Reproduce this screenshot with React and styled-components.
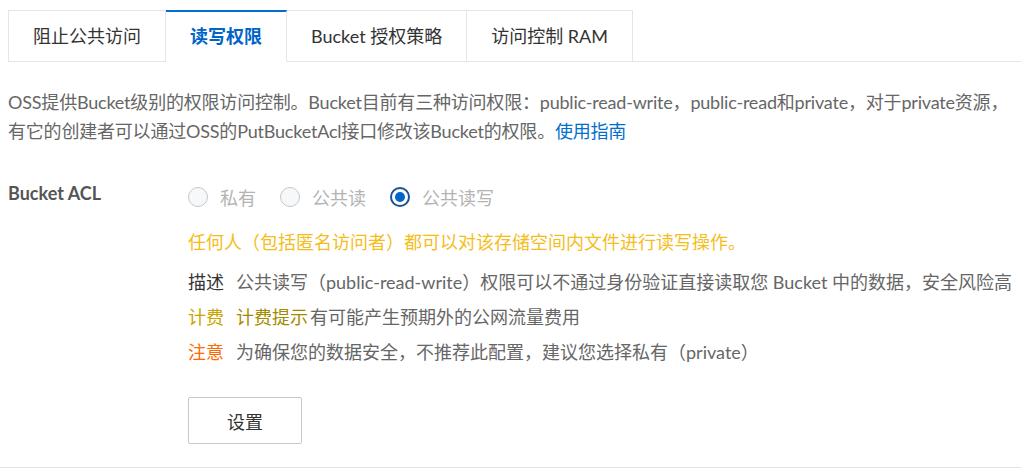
import React from "react";
import styled, { createGlobalStyle } from "styled-components";

const GlobalStyle = createGlobalStyle`
    body {
        margin: 0;
        background: #ffffff;
        font-family: Lato, "Noto Sans CJK SC", sans-serif;
        font-size: 18px;
        color: #666666;
    }
`;

const tabs = ["阻止公共访问", "读写权限", "Bucket 授权策略", "访问控制 RAM"];

const radios = [
    { label: "私有", checked: false },
    { label: "公共读", checked: false },
    { label: "公共读写", checked: true },
];

const App = () => {
    return (
        <Page>
            <GlobalStyle />
            <Tabs>
                {tabs.map((tab, i) => (
                    <Tab key={tab} active={i === 1}>
                        {tab}
                    </Tab>
                ))}
                <TabRest />
            </Tabs>
            <Intro>
                OSS提供Bucket级别的权限访问控制。Bucket目前有三种访问权限：public-read-write，public-read和private，对于private资源，有它的创建者可以通过OSS的PutBucketAcl接口修改该Bucket的权限。
                <a href="#guide">使用指南</a>
            </Intro>
            <Form>
                <Label>Bucket ACL</Label>
                <Field>
                    <RadioGroup>
                        {radios.map((r) => (
                            <RadioItem key={r.label}>
                                <Circle checked={r.checked} />
                                {r.label}
                            </RadioItem>
                        ))}
                    </RadioGroup>
                    <Warning>任何人（包括匿名访问者）都可以对该存储空间内文件进行读写操作。</Warning>
                    <Details>
                        <Detail>
                            <Tag tone="#333333">描述</Tag>
                            公共读写（public-read-write）权限可以不通过身份验证直接读取您 Bucket 中的数据，安全风险高
                        </Detail>
                        <Detail>
                            <Tag tone="#c9a400">计费</Tag>
                            <Hint>计费提示</Hint>有可能产生预期外的公网流量费用
                        </Detail>
                        <Detail>
                            <Tag tone="#ff6a00">注意</Tag>
                            为确保您的数据安全，不推荐此配置，建议您选择私有（private）
                        </Detail>
                    </Details>
                    <Button>设置</Button>
                </Field>
            </Form>
        </Page>
    );
};

const Page = styled.div`
    padding: 10px 0 0 8px;
    border-bottom: 1px solid #e5e5e5;
    padding-bottom: 23px;
`;

const Tabs = styled.div`
    display: flex;
    height: 52px;
`;

const Tab = styled.div`
    display: flex;
    align-items: center;
    padding: 0 24px 3px;
    border: 1px solid #e5e5e5;
    border-left: none;
    &:first-child {
        border-left: 1px solid #e5e5e5;
    }
    border-top: ${(p) => (p.active ? "2px solid #0070cc" : "1px solid #e5e5e5")};
    border-bottom: ${(p) => (p.active ? "1px solid #ffffff" : "1px solid #e5e5e5")};
    color: ${(p) => (p.active ? "#0064c8" : "#333333")};
    font-weight: ${(p) => (p.active ? 700 : 400)};
    white-space: nowrap;
`;

const TabRest = styled.div`
    flex: 1;
    border-bottom: 1px solid #e5e5e5;
`;

const Intro = styled.p`
    margin: 26px 0 0;
    line-height: 29px;
    letter-spacing: -0.2px;
    a {
        color: #0070cc;
        text-decoration: none;
    }
`;

const Form = styled.div`
    display: flex;
    margin-top: 36px;
`;

const Label = styled.div`
    width: 180px;
    flex-shrink: 0;
    font-weight: 700;
    color: #555555;
    line-height: 22px;
`;

const Field = styled.div`
    display: flex;
    flex-direction: column;
    align-items: flex-start;
`;

const RadioGroup = styled.div`
    display: flex;
    gap: 24px;
    height: 30px;
    align-items: center;
`;

const RadioItem = styled.label`
    display: flex;
    align-items: center;
    gap: 12px;
    color: #b3b3b3;
`;

const Circle = styled.span`
    box-sizing: border-box;
    width: 20px;
    height: 20px;
    border-radius: 50%;
    border: ${(p) => (p.checked ? "2px solid #1a4f9c" : "1px solid #c5c8ce")};
    background: ${(p) => (p.checked ? "#ffffff" : "#f7f8fa")};
    display: flex;
    align-items: center;
    justify-content: center;
    &::after {
        content: "";
        display: ${(p) => (p.checked ? "block" : "none")};
        width: 10px;
        height: 10px;
        border-radius: 50%;
        background: #0064c8;
    }
`;

const Warning = styled.div`
    margin-top: 15px;
    line-height: 30px;
    color: #f5bd1c;
`;

const Details = styled.div`
    margin-top: 8px;
`;

const Detail = styled.div`
    line-height: 35px;
    white-space: nowrap;
`;

const Tag = styled.span`
    color: ${(p) => p.tone};
    margin-right: 12px;
`;

const Hint = styled.span`
    color: #a38b00;
    margin-right: 2px;
`;

const Button = styled.button`
    margin-top: 27px;
    width: 114px;
    height: 47px;
    background: #ffffff;
    border: 1px solid #c8c9cc;
    border-radius: 2px;
    font-family: inherit;
    font-size: 18px;
    color: #333333;
`;

export default App;
